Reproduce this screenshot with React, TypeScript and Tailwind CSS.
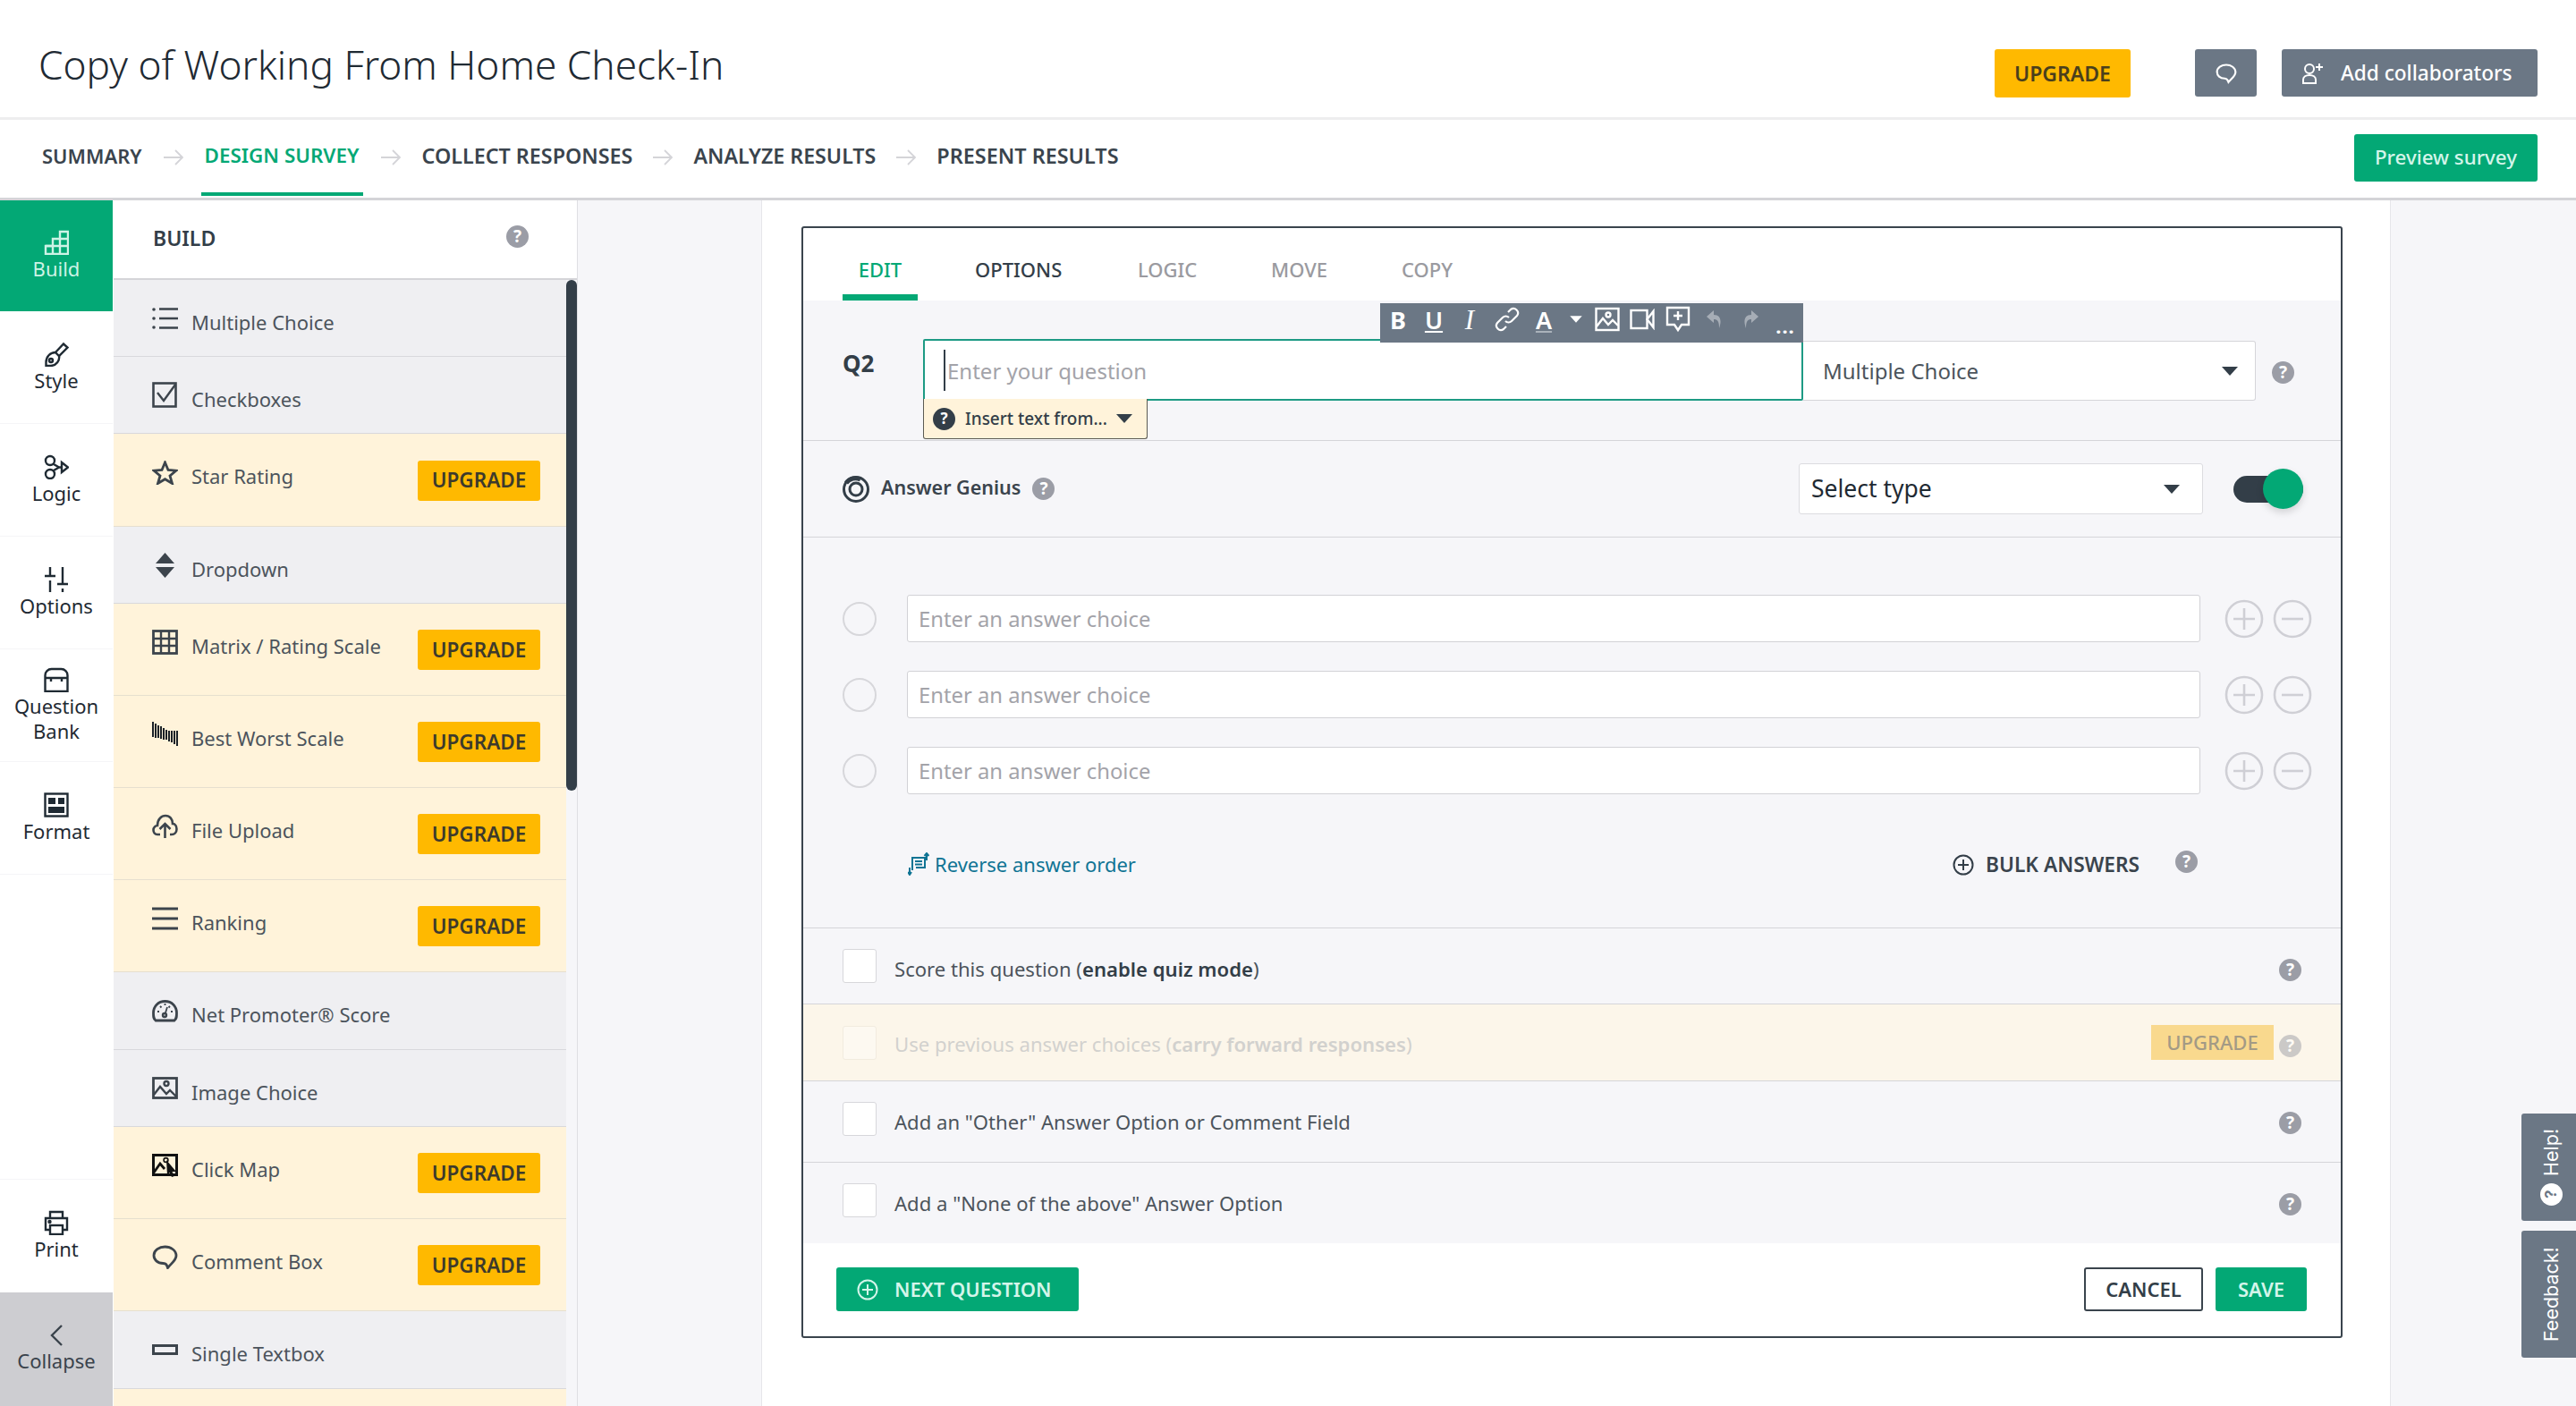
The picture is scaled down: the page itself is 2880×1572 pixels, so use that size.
import type { ReactNode } from 'react';

const GREEN = 'bg-[#03a875]';

function Svg({ size = 28, h, children, className = '' }: { size?: number; h?: number; children: ReactNode; className?: string }) {
  return (
    <svg
      width={size}
      height={h ?? size}
      viewBox={`0 0 ${size} ${h ?? size}`}
      fill="none"
      stroke="currentColor"
      strokeWidth={2.4}
      className={`shrink-0 ${className}`}
    >
      {children}
    </svg>
  );
}

const railIcons: Record<string, ReactNode> = {
  build: (
    <Svg>
      <path d="M2 27V18H10V10H18V2H27V27Z" />
      <path d="M10 18V27M18 10V27M18 10H27M2 18H27" />
    </Svg>
  ),
  style: (
    <Svg>
      <path d="M13 12L22 2.5L26.5 6.5L17 16Z" />
      <path d="M13 12C7 12 2.5 17 2.5 23V27H8C14 26.5 18 21 17 16" />
      <circle cx="8" cy="21" r="2" />
    </Svg>
  ),
  logic: (
    <Svg>
      <circle cx="7" cy="7" r="5" />
      <circle cx="7" cy="22" r="5" />
      <path d="M11 11L17 14.5L11 18M15 14.5H20" />
      <path d="M20 9L27 14.5L20 20Z" />
    </Svg>
  ),
  options: (
    <Svg>
      <path d="M7 0V10M1 10H13M7 15V28M21 0V19M15 19H27M21 24V28" />
    </Svg>
  ),
  bank: (
    <Svg>
      <path d="M1.5 27V9A7 7 0 0 1 8.5 2H19.5A7 7 0 0 1 26.5 9V27Z" />
      <path d="M1.5 12H26.5M8 12V16M20 12V16" />
    </Svg>
  ),
  format: (
    <Svg>
      <rect x="1.5" y="1.5" width="25" height="25" />
      <path d="M5 6H13V13H5ZM16 6H23V13H16ZM5 16H23V23H5Z" fill="currentColor" stroke="none" />
    </Svg>
  ),
  print: (
    <Svg>
      <path d="M7 9V2H21V9M7 22H2V9H26V22H21" />
      <rect x="7" y="17" width="14" height="10" />
      <circle cx="6.5" cy="13" r="1" fill="currentColor" />
    </Svg>
  ),
  collapse: (
    <Svg size={16} h={24}>
      <path d="M14 1L3 12L14 23" />
    </Svg>
  ),
};

const itemIcons: Record<string, ReactNode> = {
  list: (
    <Svg size={29} h={26}>
      <circle cx="2" cy="3" r="1.8" fill="currentColor" stroke="none" />
      <circle cx="2" cy="13" r="1.8" fill="currentColor" stroke="none" />
      <circle cx="2" cy="23" r="1.8" fill="currentColor" stroke="none" />
      <path d="M8 2.5H29M8 13H29M8 23.5H29" strokeWidth={2.6} />
    </Svg>
  ),
  check: (
    <Svg size={29} h={29}>
      <rect x="1.5" y="1.5" width="25" height="26" strokeWidth={2.6} />
      <path d="M6 12L13 21L26 3" />
    </Svg>
  ),
  star: (
    <Svg size={29} h={27}>
      <path d="M14.5 2L18 10.5L27 11.2L20 17L22.5 25.5L14.5 20.7L6.5 25.5L9 17L2 11.2L11 10.5Z" strokeWidth={2.8} />
    </Svg>
  ),
  dropdown: (
    <Svg size={29} h={28}>
      <path d="M14.5 0L25 12H4ZM4 16H25L14.5 28Z" fill="currentColor" stroke="none" />
    </Svg>
  ),
  matrix: (
    <Svg size={29} h={28}>
      <rect x="1.5" y="1.5" width="26" height="25" strokeWidth={2.8} />
      <path d="M10 1.5V26.5M19 1.5V26.5M1.5 10H27.5M1.5 18H27.5" />
    </Svg>
  ),
  bestworst: (
    <Svg size={29} h={28} className="text-[#1b2127]">
      <path
        d="M1 0V17M4 2V18M7 4V18M10 5V19M13 7V20M16 9V20M19 10V22M22 10V23M25 10V25M28 10V27"
        strokeWidth={2}
      />
    </Svg>
  ),
  upload: (
    <Svg size={29} h={27}>
      <path d="M9 23H6C3 23 1.5 20.5 1.5 18C1.5 15 4 13 6 13C6 6 10.5 2 15 2C20 2 23 6 23 11C26 11 27.5 14 27.5 17C27.5 20.5 25 23 22 23H20" strokeWidth={2.6} />
      <path d="M14.5 27V12M8.5 17L14.5 11L20.5 17" strokeWidth={2.6} />
    </Svg>
  ),
  ranking: (
    <Svg size={29} h={26}>
      <path d="M0 2H29M0 13H29M0 24H29" strokeWidth={3} />
    </Svg>
  ),
  nps: (
    <Svg size={29} h={25}>
      <path d="M4 23C1.5 21 1.5 19 1.5 14.5C1.5 7 7 1.5 14.5 1.5C22 1.5 27.5 7 27.5 14.5C27.5 19 27.5 21 25 23Z" strokeWidth={2.8} />
      <path d="M6 13H8M21 13H23M9 7L10.5 8.5M20 7L18.5 8.5M14.5 4V6M17 8L14.5 16" strokeWidth={1.8} />
      <circle cx="14" cy="17" r="2" />
    </Svg>
  ),
  image: (
    <Svg size={29} h={25}>
      <rect x="1.5" y="1.5" width="26" height="22" strokeWidth={2.8} />
      <path d="M2 20L9 11L16 19L20 15L27 22" />
      <circle cx="16" cy="7.5" r="2.5" />
    </Svg>
  ),
  clickmap: (
    <Svg size={29} h={26} className="text-[#111]">
      <rect x="1.5" y="1.5" width="26" height="22" strokeWidth={3} />
      <path d="M2 21L9 11L14 17" strokeWidth={2.8} />
      <path d="M16 7L27 20L22.5 20L25 25L22 26L19.5 21L17 24Z" fill="currentColor" stroke="none" />
      <circle cx="15.5" cy="7" r="2.4" strokeWidth={1.6} />
    </Svg>
  ),
  comment: (
    <Svg size={29} h={27}>
      <path d="M14.5 2C21 2 27 6 27 12C27 17 22 20 17.5 25.5C16.5 22.5 16 20.5 12.5 20.5C6 20.5 2 16.5 2 11.5C2 6 8 2 14.5 2Z" strokeWidth={2.8} />
    </Svg>
  ),
  textbox: (
    <Svg size={29} h={12}>
      <rect x="1.5" y="1.5" width="26" height="9" strokeWidth={3} />
    </Svg>
  ),
};

const railTop = [
  { key: 'style', label: ['Style'] },
  { key: 'logic', label: ['Logic'] },
  { key: 'options', label: ['Options'] },
  { key: 'bank', label: ['Question', 'Bank'] },
  { key: 'format', label: ['Format'] },
];

const items = [
  { icon: 'list', label: 'Multiple Choice', h: 'h-[86px]' },
  { icon: 'check', label: 'Checkboxes', h: 'h-[86px]' },
  { icon: 'star', label: 'Star Rating', h: 'h-[104px]', up: true },
  { icon: 'dropdown', label: 'Dropdown', h: 'h-[86px]' },
  { icon: 'matrix', label: 'Matrix / Rating Scale', h: 'h-[103px]', up: true },
  { icon: 'bestworst', label: 'Best Worst Scale', h: 'h-[103px]', up: true },
  { icon: 'upload', label: 'File Upload', h: 'h-[103px]', up: true },
  { icon: 'ranking', label: 'Ranking', h: 'h-[103px]', up: true },
  { icon: 'nps', label: 'Net Promoter® Score', h: 'h-[87px]' },
  { icon: 'image', label: 'Image Choice', h: 'h-[86px]' },
  { icon: 'clickmap', label: 'Click Map', h: 'h-[103px]', up: true },
  { icon: 'comment', label: 'Comment Box', h: 'h-[103px]', up: true },
  { icon: 'textbox', label: 'Single Textbox', h: 'h-[87px]' },
];

function Help({ className = '' }: { className?: string }) {
  return (
    <span className={`flex h-[25px] w-[25px] shrink-0 items-center justify-center rounded-full bg-[#9b9da6] text-[19px] font-bold leading-none text-white ${className}`}>
      ?
    </span>
  );
}

function Caret({ className = '' }: { className?: string }) {
  return <span className={`h-0 w-0 border-x-[9px] border-t-[10px] border-x-transparent border-t-[#333e48] ${className}`} />;
}

function CircleBtn({ minus = false }: { minus?: boolean }) {
  return (
    <svg width="44" height="44" viewBox="0 0 44 44" fill="none" stroke="#cfcfd5" strokeWidth={2.6} className="shrink-0">
      <circle cx="22" cy="22" r="20" />
      <path d={minus ? 'M10 22H34' : 'M10 22H34M22 10V34'} />
    </svg>
  );
}

function Arrow({ className = '' }: { className?: string }) {
  return (
    <svg width="24" height="20" viewBox="0 0 24 20" fill="none" stroke="#d4d4d8" strokeWidth={1.8} className={`shrink-0 ${className}`}>
      <path d="M1 10H22M14 2L22 10L14 18" />
    </svg>
  );
}

function Sidebar() {
  return (
    <div className="flex h-full w-[127px] shrink-0 flex-col bg-white pr-[1px] text-[22px] leading-[28px] text-[#1f2a33]">
      <div className={`flex h-[124px] flex-col items-center pt-[33px] text-[#cdf3e6] ${GREEN}`}>
        {railIcons.build}
        <span className="mt-[1px]">Build</span>
      </div>
      {railTop.map(t => (
        <div key={t.key} className={`flex h-[126px] flex-col items-center border-b border-[#f5f5f7] ${t.label.length > 1 ? 'pt-[20px]' : 'pt-[34px]'}`}>
          {railIcons[t.key]}
          {t.label.map(l => (
            <span key={l} className="mt-[1px] -mb-[1px]">{l}</span>
          ))}
        </div>
      ))}
      <div className="flex-1" />
      <div className="flex h-[127px] flex-col items-center border-t border-[#f5f5f7] pt-[34px]">
        {railIcons.print}
        <span className="mt-[1px]">Print</span>
      </div>
      <div className="flex h-[127px] flex-col items-center bg-[#cdcdd1] pt-[36px] text-[#3a434c]">
        {railIcons.collapse}
        <span className="mt-[2px]">Collapse</span>
      </div>
    </div>
  );
}

function BuildPanel() {
  return (
    <div className="relative flex h-full w-[519px] shrink-0 flex-col overflow-hidden border-r border-[#dfdfe3] bg-[#f6f6f9]">
      <div className="flex h-[89px] shrink-0 items-center justify-between border-b-2 border-[#d4d4d8] bg-white pb-[2px] pl-[44px] pr-[54px]">
        <span className="text-[23px] font-semibold text-[#333e48]">BUILD</span>
        <Help className="-mt-[4px]" />
      </div>
      <div className="w-[506px] shrink-0">
        {items.map(it => (
          <div
            key={it.label}
            className={`flex items-center justify-between border-b pl-[43px] pr-[29px] ${it.h} ${it.up ? 'border-[#e6dfcf] bg-[#fff3da] pt-[1px]' : 'border-[#d8d8dc] bg-[#efeff2]'}`}
          >
            <div className={`flex items-center gap-[15px] text-[#4c545c] ${it.up ? 'pb-[18px]' : ''}`}>
              <span className="flex w-[29px] justify-center text-[#3c444c]">{itemIcons[it.icon]}</span>
              <span className="mt-[8px] text-[22px] leading-[28px]">{it.label}</span>
            </div>
            {it.up && (
              <span className="flex h-[45px] w-[137px] items-center justify-center rounded-[3px] bg-[#ffb900] text-[22.5px] font-semibold text-[#3d3a2c]">
                UPGRADE
              </span>
            )}
          </div>
        ))}
        <div className="h-[30px] bg-[#fff3da]" />
      </div>
      <div className="absolute right-0 top-[89px] h-[571px] w-[12px] rounded-full bg-[#333e48]" />
    </div>
  );
}

function Toolbar() {
  return (
    <div className="absolute left-[509px] -top-[42px] flex h-[44px] w-[473px] items-center bg-[#6b7785] pb-[8px] text-[27px] leading-none text-white">
      <span className="w-[40px] text-center font-bold">B</span>
      <span className="w-[40px] text-center font-semibold underline">U</span>
      <span className="w-[40px] text-center italic font-['Liberation_Serif',serif] text-[31px]">I</span>
      <span className="flex w-[43px] justify-center">
        <svg width="28" height="28" viewBox="0 0 28 28" fill="none" stroke="white" strokeWidth={2.2}>
          <path d="M12 16A5 5 0 0 0 19 16L25 10A5 5 0 0 0 18 3L15 6M16 12A5 5 0 0 0 9 12L3 18A5 5 0 0 0 10 25L13 22" />
        </svg>
      </span>
      <span className="w-[40px] text-center font-semibold underline decoration-[#aab2bb]">A</span>
      <span className="flex w-[31px] justify-center"><Caret className="scale-75 border-t-white" /></span>
      <span className="flex w-[39px] justify-center">
        <svg width="28" height="28" viewBox="0 0 28 28" fill="none" stroke="white" strokeWidth={2.4}>
          <rect x="1.5" y="2" width="25" height="24" />
          <path d="M2 22L9 13L15 20L20 15L26 21" />
          <circle cx="15" cy="9" r="2.5" />
        </svg>
      </span>
      <span className="flex w-[40px] justify-center">
        <svg width="28" height="24" viewBox="0 0 28 24" fill="none" stroke="white" strokeWidth={2.4}>
          <rect x="1.5" y="2" width="18" height="20" />
          <path d="M26.5 3L19.5 12L26.5 21Z" />
        </svg>
      </span>
      <span className="flex w-[40px] justify-center">
        <svg width="28" height="30" viewBox="0 0 28 30" fill="none" stroke="white" strokeWidth={2.4}>
          <path d="M2 2H26V21H18L14 27L10 21H2Z" />
          <path d="M14 6V16M9 11H19" />
        </svg>
      </span>
      <span className="flex w-[41px] justify-center opacity-40">
        <svg width="20" height="22" viewBox="0 0 20 22" fill="white"><path d="M9 1L1 8L9 15V11C13 11 15 13 15 21C18 13 17 6 9 6Z" /></svg>
      </span>
      <span className="flex w-[40px] justify-center opacity-40">
        <svg width="20" height="22" viewBox="0 0 20 22" fill="white"><path d="M11 1L19 8L11 15V11C7 11 5 13 5 21C2 13 3 6 11 6Z" /></svg>
      </span>
      <span className="w-[38px] pt-[14px] text-center text-[22px] font-bold tracking-[1px]">...</span>
    </div>
  );
}

function QuestionRow() {
  return (
    <div className="flex h-[157px] border-b border-[#d5d5d9] pl-[44px] pt-[43px]">
      <span className="w-[90px] pt-[8px] text-[26px] font-bold leading-[38px] text-[#333e48]">Q2</span>
      <div className="relative h-[69px] w-[984px] shrink-0 rounded-[2px] border-2 border-[#1d9a84] bg-white">
        <div className="flex h-full items-center pl-[21px]">
          <span className="h-[46px] w-[2px] bg-[#333e48]" />
          <span className="ml-[2px] mt-[2px] text-[24px] text-[#a3a3a9]">Enter your question</span>
        </div>
        <Toolbar />
        <div className="absolute left-[-2px] top-full flex h-[45px] w-[251px] items-center rounded-b-[3px] border border-t-0 border-[#5b5a52] bg-[#fff3da] pl-[10px] text-[19px] font-medium text-[#333e48]">
          <span className="flex h-[25px] w-[25px] shrink-0 items-center justify-center rounded-full bg-[#333e48] text-[17px] font-bold text-white">?</span>
          <span className="ml-[11px] whitespace-nowrap">Insert text from...</span>
          <Caret className="ml-[10px]" />
        </div>
      </div>
      <div className="mt-[2px] flex h-[67px] w-[506px] shrink-0 items-center justify-between rounded-r-[3px] border border-l-0 border-[#d5d5d9] bg-white pl-[22px] pr-[19px] text-[24px] text-[#4c545c]">
        <span>Multiple Choice</span>
        <Caret />
      </div>
      <Help className="ml-[18px] mt-[25px]" />
    </div>
  );
}

function GeniusRow() {
  return (
    <div className="flex h-[108px] items-center justify-between border-b border-[#d5d5d9] pl-[44px] pr-[42px]">
      <div className="flex items-center">
        <svg width="30" height="30" viewBox="0 0 30 30" fill="none" stroke="#333e48" className="shrink-0">
          <circle cx="15" cy="15" r="13.5" strokeWidth={3} />
          <circle cx="15" cy="15" r="7" strokeWidth={3} />
          <path d="M4 8A13 13 0 0 1 20 4" strokeWidth={5} />
        </svg>
        <span className="ml-[13px] -mt-[2px] text-[21.5px] font-semibold text-[#3a444d]">Answer Genius</span>
        <Help className="ml-[13px]" />
      </div>
      <div className="flex items-center">
        <div className="flex h-[57px] w-[452px] items-center justify-between rounded-[3px] border border-[#dcdce0] bg-white pl-[13px] pr-[25px] text-[26.5px] text-[#1f2a33]">
          <span>Select type</span>
          <Caret />
        </div>
        <div className="relative ml-[34px] h-[30px] w-[78px] rounded-full bg-[#333e48]">
          <span className="absolute -top-[8px] right-0 h-[45px] w-[45px] rounded-full bg-[#03a875] shadow-[0_4px_8px_rgba(0,0,0,0.15)]" />
        </div>
      </div>
    </div>
  );
}

function AnswerRow() {
  return (
    <div className="flex h-[53px] items-center pl-[44px]">
      <span className="h-[38px] w-[38px] shrink-0 rounded-full border-2 border-[#d7d7db]" />
      <div className="ml-[34px] flex h-full w-[1446px] items-center rounded-[3px] border border-[#d2d2d6] bg-white pl-[12px] pt-[3px] text-[23.8px] text-[#a3a3a9]">
        Enter an answer choice
      </div>
      <span className="ml-[27px] flex gap-[10px]">
        <CircleBtn />
        <CircleBtn minus />
      </span>
    </div>
  );
}

function AnswersBlock() {
  return (
    <div className="h-[437px] border-b border-[#d5d5d9] pt-[64px]">
      <div className="flex flex-col gap-[32px]">
        <AnswerRow />
        <AnswerRow />
        <AnswerRow />
      </div>
      <div className="mt-[58px] flex h-[40px] items-center pl-[117px]">
        <svg width="24" height="26" viewBox="0 0 24 26" fill="none" stroke="#0f7494" strokeWidth={2} className="shrink-0">
          <path d="M5 20V6H19V17H9M8 10H16M8 13.5H16" />
          <path d="M2 17V25M0 22L2 25L4 22M21 9V1M18.5 4L21 1L23.5 4" />
        </svg>
        <span className="ml-[6px] text-[22px] text-[#0f7494]">Reverse answer order</span>
        <span className="ml-auto flex items-center pt-[2px]">
          <svg width="24" height="24" viewBox="0 0 24 24" fill="none" stroke="#333e48" strokeWidth={2}>
            <circle cx="12" cy="12" r="10.5" />
            <path d="M6 12H18M12 6V18" />
          </svg>
          <span className="ml-[13px] text-[22.7px] font-semibold text-[#3a444d]">BULK ANSWERS</span>
          <Help className="ml-[40px] mr-[160px] -mt-[6px]" />
        </span>
      </div>
    </div>
  );
}

function OptionRow({ h, children, muted = false, last = false, up = false }: { h: string; children: ReactNode; muted?: boolean; last?: boolean; up?: boolean }) {
  return (
    <div className={`flex items-center pl-[44px] pr-[44px] ${h} ${up ? 'pb-[6px]' : ''} ${last ? '' : 'border-b border-[#d5d5d9]'} ${muted ? 'bg-[#fcf6ea] text-[#d2d1ce]' : 'text-[#4c545c]'}`}>
      <span className={`h-[38px] w-[38px] shrink-0 rounded-[3px] border ${muted ? 'border-[#f2ecdf] bg-[#fdf9f1]' : 'border-[#d7d7db] bg-white'}`} />
      <span className={`ml-[20px] flex-1 text-[22.1px] ${muted ? 'mt-[4px]' : 'mt-[7px]'}`}>{children}</span>
      {muted ? (
        <>
          <span className="flex h-[39px] w-[137px] items-center justify-center bg-[#f9d98e] text-[22px] font-medium text-[#a39a85]">UPGRADE</span>
          <Help className="ml-[6px] mt-[8px] opacity-50" />
        </>
      ) : (
        <Help className="mt-[8px]" />
      )}
    </div>
  );
}

function Card() {
  return (
    <div className="flex h-[1243px] w-[1723px] flex-col rounded-[3px] border-2 border-[#3a444d] bg-white">
      <div className="flex h-[81px] shrink-0 items-end pl-[44px] text-[22px] font-medium">
        <span className="flex h-[74px] w-[84px] items-center justify-center border-b-[7px] border-[#03a875] pt-[11px] text-[#03a875]">EDIT</span>
        <span className="ml-[64px] flex h-[74px] w-[182px] items-center pt-[12px] pb-[7px] text-[#333e48]">OPTIONS</span>
        <span className="flex h-[74px] w-[149px] items-center pt-[12px] pb-[7px] text-[#9a9aa0]">LOGIC</span>
        <span className="flex h-[74px] w-[146px] items-center pt-[12px] pb-[7px] text-[#9a9aa0]">MOVE</span>
        <span className="flex h-[74px] items-center pt-[12px] pb-[7px] text-[#9a9aa0]">COPY</span>
      </div>
      <div className="shrink-0 bg-[#f6f6f9]">
        <QuestionRow />
        <GeniusRow />
        <AnswersBlock />
        <OptionRow h="h-[85px]">
          Score this question (<b className="font-semibold text-[#333e48]">enable quiz mode</b>)
        </OptionRow>
        <OptionRow h="h-[86px]" muted>
          Use previous answer choices (<b className="font-semibold">carry forward responses</b>)
        </OptionRow>
        <OptionRow h="h-[91px]" up>Add an &quot;Other&quot; Answer Option or Comment Field</OptionRow>
        <OptionRow h="h-[90px]" last up>Add a &quot;None of the above&quot; Answer Option</OptionRow>
      </div>
      <div className="flex flex-1 items-start justify-between pl-[37px] pr-[38px] pt-[27px]">
        <button className={`flex h-[49px] w-[271px] items-center rounded-[3px] pl-[23px] text-[22px] font-semibold text-[#d4f5ea] ${GREEN}`}>
          <svg width="24" height="24" viewBox="0 0 24 24" fill="none" stroke="currentColor" strokeWidth={2} className="shrink-0">
            <circle cx="12" cy="12" r="10.5" />
            <path d="M6 12H18M12 6V18" />
          </svg>
          <span className="ml-[18px]">NEXT QUESTION</span>
        </button>
        <div className="flex gap-[14px]">
          <button className="h-[49px] w-[133px] rounded-[3px] border-2 border-[#3a444d] bg-white text-[22px] font-semibold text-[#333e48]">CANCEL</button>
          <button className={`h-[49px] w-[102px] rounded-[3px] text-[22px] font-semibold text-[#d4f5ea] ${GREEN}`}>SAVE</button>
        </div>
      </div>
    </div>
  );
}

export default function App() {
  return (
    <div className="relative flex h-[1572px] w-[2880px] flex-col overflow-hidden bg-white font-['Noto_Sans','Liberation_Sans',sans-serif]">
      <header className="flex h-[134px] shrink-0 items-start justify-between border-b-[3px] border-[#eeeeef] pl-[43px] pr-[43px]">
        <h1 className="pt-[41px] text-[44.2px] font-light leading-[62px] text-[#1f2a33]">Copy of Working From Home Check-In</h1>
        <div className="flex items-start pt-[55px]">
          <button className="flex h-[54px] w-[152px] items-center justify-center rounded-[3px] bg-[#ffb900] text-[23px] font-semibold text-[#4a3f1c]">UPGRADE</button>
          <button className="ml-[72px] flex h-[53px] w-[69px] items-center justify-center rounded-[3px] bg-[#6b7785] text-white">
            <svg width="24" height="26" viewBox="0 0 29 27" fill="none" stroke="currentColor" strokeWidth={2.6}>
              <path d="M14.5 2C21 2 27 6 27 12C27 17 22 20 17.5 25.5C16.5 22.5 16 20.5 12.5 20.5C6 20.5 2 16.5 2 11.5C2 6 8 2 14.5 2Z" />
            </svg>
          </button>
          <button className="ml-[28px] flex h-[53px] w-[286px] items-center rounded-[3px] bg-[#6b7785] pl-[22px] text-[22.6px] font-medium text-white">
            <svg width="24" height="24" viewBox="0 0 24 24" fill="none" stroke="currentColor" strokeWidth={2} className="shrink-0">
              <circle cx="9" cy="7" r="5" />
              <path d="M2 23V19C2 16 5 14 9 14C13 14 16 16 16 19V23ZM20 1V9M16 5H24" />
            </svg>
            <span className="ml-[20px] whitespace-nowrap">Add collaborators</span>
          </button>
        </div>
      </header>

      <nav className="flex h-[90px] shrink-0 items-center border-b-[3px] border-[#d4d4d8] pb-[7px] pl-[47px] pr-[43px] text-[23px] font-semibold text-[#3a444d]">
        <span className="whitespace-nowrap text-[22px]">SUMMARY</span>
        <Arrow className="mx-[23px] mt-[4px]" />
        <span className="relative whitespace-nowrap text-[22.4px] text-[#03a875]">
          DESIGN SURVEY
          <span className="absolute -left-[4px] -right-[4px] top-[58px] h-[4px] bg-[#03a875]" />
        </span>
        <Arrow className="mx-[23px] mt-[4px]" />
        <span className="whitespace-nowrap text-[23.3px]">COLLECT RESPONSES</span>
        <Arrow className="mx-[22px] mt-[4px]" />
        <span className="whitespace-nowrap text-[23.2px]">ANALYZE RESULTS</span>
        <Arrow className="mx-[22px] mt-[4px]" />
        <span className="whitespace-nowrap pt-[1px] text-[23.4px]">PRESENT RESULTS</span>
        <button className={`ml-auto mt-[5px] flex h-[53px] w-[205px] items-center justify-center rounded-[3px] pb-[2px] text-[22.3px] font-medium text-[#d4f5ea] ${GREEN}`}>Preview survey</button>
      </nav>

      <main className="flex min-h-0 flex-1">
        <Sidebar />
        <BuildPanel />
        <div className="h-full w-[206px] shrink-0 border-r border-[#e6e6ea] bg-[#f6f6f9]" />
        <div className="h-full w-[1821px] shrink-0 border-r border-[#e6e6ea] pl-[44px] pt-[29px]">
          <Card />
        </div>
        <div className="h-full flex-1 bg-[#f6f6f9]" />
      </main>

      <div className="absolute right-0 top-[1245px] flex h-[120px] w-[61px] rotate-180 items-center justify-center rounded-r-[3px] bg-[#6b7785] pr-[6px] font-['Inter',sans-serif] text-[21.5px] text-white [writing-mode:vertical-rl]">
        <span className="flex items-center gap-[8px]">
          <span className="flex h-[25px] w-[25px] items-center justify-center rounded-full bg-white text-[17px] font-bold text-[#6b7785]">?</span>
          Help!
        </span>
      </div>
      <div className="absolute right-0 top-[1376px] flex h-[142px] w-[61px] rotate-180 items-center justify-center rounded-r-[3px] bg-[#6b7785] pr-[6px] font-['Inter',sans-serif] text-[21.5px] text-white [writing-mode:vertical-rl]">
        Feedback!
      </div>
    </div>
  );
}
